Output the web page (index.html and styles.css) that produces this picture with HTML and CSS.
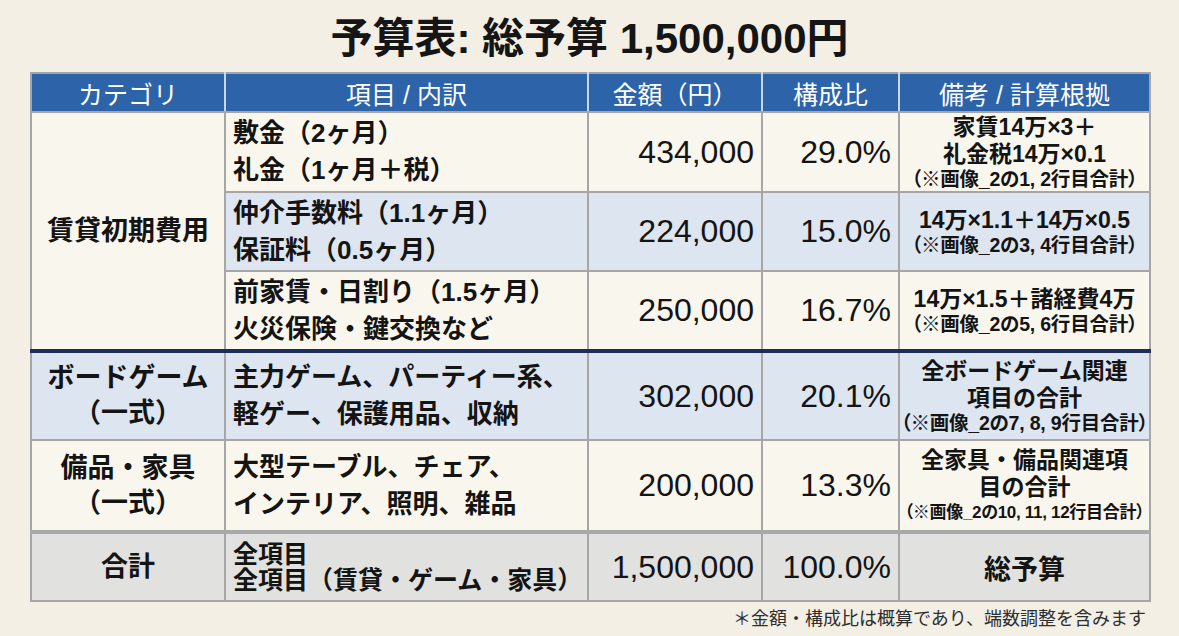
FILE: index.html
```html
<!DOCTYPE html>
<html lang="ja">
<head>
<meta charset="utf-8">
<title>予算表</title>
<link rel="stylesheet" href="styles.css">
</head>
<body>
<div class="page">
  <h1 class="title">予算表: 総予算 1,500,000円</h1>
  <table class="budget">
    <colgroup>
      <col class="c-cat"><col class="c-item"><col class="c-amt"><col class="c-pct"><col class="c-note">
    </colgroup>
    <thead>
      <tr class="head">
        <th>カテゴリ</th>
        <th>項目 / 内訳</th>
        <th>金額（円）</th>
        <th>構成比</th>
        <th>備考 / 計算根拠</th>
      </tr>
    </thead>
    <tbody>
      <tr class="r1">
        <td class="cat cream" rowspan="3">賃貸初期費用</td>
        <td class="item cream">敷金（2ヶ月）<br>礼金（1ヶ月＋税）</td>
        <td class="num cream">434,000</td>
        <td class="num cream">29.0%</td>
        <td class="note cream"><span class="nl">家賃14万×3＋</span><span class="nl">礼金税14万×0.1</span><span class="ns">（※画像_2の1, 2行目合計）</span></td>
      </tr>
      <tr class="r2">
        <td class="item blue">仲介手数料（1.1ヶ月）<br>保証料（0.5ヶ月）</td>
        <td class="num blue">224,000</td>
        <td class="num blue">15.0%</td>
        <td class="note blue"><span class="nl">14万×1.1＋14万×0.5</span><span class="ns">（※画像_2の3, 4行目合計）</span></td>
      </tr>
      <tr class="r3 sep">
        <td class="item cream">前家賃・日割り（1.5ヶ月）<br>火災保険・鍵交換など</td>
        <td class="num cream">250,000</td>
        <td class="num cream">16.7%</td>
        <td class="note cream"><span class="nl">14万×1.5＋諸経費4万</span><span class="ns">（※画像_2の5, 6行目合計）</span></td>
      </tr>
      <tr class="r4 after-sep">
        <td class="cat blue">ボードゲーム<br>（一式）</td>
        <td class="item blue">主力ゲーム、パーティー系、<br>軽ゲー、保護用品、収納</td>
        <td class="num blue">302,000</td>
        <td class="num blue">20.1%</td>
        <td class="note blue"><span class="nl">全ボードゲーム関連</span><span class="nl">項目の合計</span><span class="ns">（※画像_2の7, 8, 9行目合計）</span></td>
      </tr>
      <tr class="r5">
        <td class="cat cream">備品・家具<br>（一式）</td>
        <td class="item cream">大型テーブル、チェア、<br>インテリア、照明、雑品</td>
        <td class="num cream">200,000</td>
        <td class="num cream">13.3%</td>
        <td class="note cream"><span class="nl">全家具・備品関連項</span><span class="nl">目の合計</span><span class="ns tiny">（※画像_2の10, 11, 12行目合計）</span></td>
      </tr>
      <tr class="r6 total">
        <td class="cat gray">合計</td>
        <td class="item tight gray">全項目<br>全項目（賃貸・ゲーム・家具）</td>
        <td class="num gray">1,500,000</td>
        <td class="num gray">100.0%</td>
        <td class="note gray"><span class="strong">総予算</span></td>
      </tr>
    </tbody>
  </table>
  <p class="footnote">＊金額・構成比は概算であり、端数調整を含みます</p>
</div>
</body>
</html>
```
FILE: styles.css
```css
html, body {
  margin: 0;
  padding: 0;
}

body {
  background: #f3efe5;
  font-family: "Liberation Sans", "Noto Sans CJK JP", sans-serif;
  color: #141414;
}

.page {
  width: 1119px;
  margin: 0 auto;
  padding-top: 14px;
}

.title {
  margin: 0 0 8px;
  font-size: 42px;
  line-height: 50px;
  font-weight: 700;
  text-align: center;
  color: #151515;
}

.budget {
  width: 1119px;
  border-collapse: collapse;
  table-layout: fixed;
}

.c-cat { width: 194px; }
.c-item { width: 363px; }
.c-amt { width: 174px; }
.c-pct { width: 137px; }
.c-note { width: 251px; }

.budget th,
.budget td {
  border: 2px solid #a6a6a6;
  padding: 0;
  vertical-align: middle;
}

.head th {
  height: 37px;
  background: #2c63a9;
  color: #ffffff;
  font-size: 25px;
  font-weight: 400;
  text-align: center;
  border-top-color: #9fa6b0;
  border-left-color: #c9d7ea;
  border-right-color: #c9d7ea;
}

.head th:first-child { border-left-color: #a6a6a6; }
.head th:last-child { border-right-color: #a6a6a6; }

.cream { background: #f9f6ed; }
.blue { background: #dce5f0; }
.gray { background: #e1e1e0; }

.r1 td { height: 78px; }
.r2 td { height: 77px; }
.r3 td { height: 77px; }
.r4 td { height: 86px; }
.r5 td { height: 89px; }
.r6 td { height: 66px; }

.sep td { border-bottom: 4px solid #1c2d5a; }
.after-sep td { border-top: 4px solid #1c2d5a; }
.r5 td { border-bottom: 4px solid #a9a9a9; }

.cat {
  text-align: center;
  font-size: 27px;
  line-height: 35px;
  font-weight: 700;
}

.item {
  text-align: left;
  padding-left: 7px !important;
  font-size: 26px;
  line-height: 37px;
  font-weight: 700;
  white-space: nowrap;
}

.item.tight {
  line-height: 26px;
  font-size: 25px;
}

.num {
  text-align: right;
  padding-right: 7px !important;
  font-size: 32px;
  font-weight: 400;
  white-space: nowrap;
}

.note {
  text-align: center;
  font-weight: 700;
  white-space: nowrap;
}

.nl {
  display: block;
  font-size: 23px;
  line-height: 27px;
}

.ns {
  display: block;
  font-size: 19.5px;
  line-height: 23px;
  font-weight: 700;
  letter-spacing: -0.2px;
  font-feature-settings: "palt" 1;
}

.ns.tiny {
  font-size: 17px;
  letter-spacing: -0.3px;
}

.strong {
  font-size: 27px;
  font-weight: 700;
}

.footnote {
  margin: 5px 3px 0 0;
  text-align: right;
  font-size: 18px;
  line-height: 24px;
  color: #2e2e2e;
}
```
